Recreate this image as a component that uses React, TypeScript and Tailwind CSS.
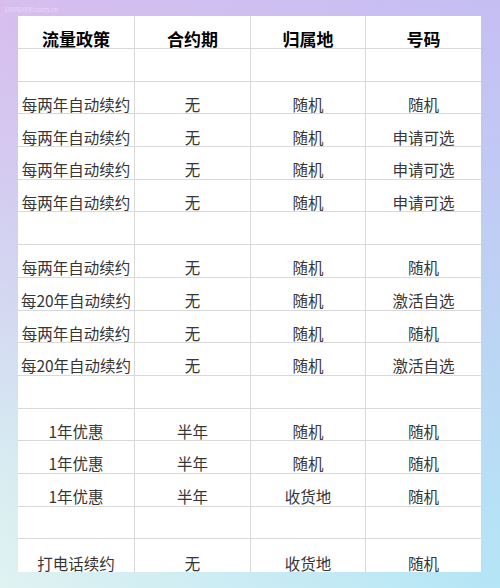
import React from 'react';

type Row = [string, string, string, string] | null;

const rows: Row[] = [
  null,
  ['每两年自动续约', '无', '随机', '随机'],
  ['每两年自动续约', '无', '随机', '申请可选'],
  ['每两年自动续约', '无', '随机', '申请可选'],
  ['每两年自动续约', '无', '随机', '申请可选'],
  null,
  ['每两年自动续约', '无', '随机', '随机'],
  ['每20年自动续约', '无', '随机', '激活自选'],
  ['每两年自动续约', '无', '随机', '随机'],
  ['每20年自动续约', '无', '随机', '激活自选'],
  null,
  ['1年优惠', '半年', '随机', '随机'],
  ['1年优惠', '半年', '随机', '随机'],
  ['1年优惠', '半年', '收货地', '随机'],
  null,
  ['打电话续约', '无', '收货地', '随机'],
];

const headers = ['流量政策', '合约期', '归属地', '号码'];
const widths = ['w-[116px]', 'w-[116px]', 'w-[115px]', 'w-[116px]'];

const Cell: React.FC<{ text?: string; col: number; header?: boolean }> = ({ text, col, header }) => (
  <div
    className={`${widths[col]} flex items-end justify-center pb-[1px] leading-none ${
      col > 0 ? 'border-l border-[#d9d9d9]' : ''
    } ${header ? 'text-[17px] font-bold text-black' : 'text-[15.5px] text-[#363636]'}`}
  >
    {text}
  </div>
);

export default function App() {
  return (
    <div
      className="w-[500px] h-[588px] overflow-hidden bg-[linear-gradient(135deg,rgba(228,190,236,0.6)_0%,rgba(228,190,236,0)_45%),linear-gradient(to_top_right,rgba(235,245,240,0.8)_0%,rgba(235,245,240,0)_50%),linear-gradient(to_bottom,#c6bef2,#b4e6f6)]"
      style={{ fontFamily: '"Noto Sans CJK SC", "Noto Sans", sans-serif' }}
    >
      <div className="h-[16px] pl-[4px] pt-[6px] text-[7px] leading-none text-white/40 tracking-tight">
        19050000.com.cn
      </div>
      <div className="ml-[18px] w-[463px] h-[556px] bg-white flex flex-col">
        <div className="flex h-[33px] border-b border-[#d9d9d9]">
          {headers.map((h, i) => (
            <Cell key={i} text={h} col={i} header />
          ))}
        </div>
        {rows.map((r, idx) => (
          <div
            key={idx}
            className={`flex h-[32.7px] ${idx < rows.length - 1 ? 'border-b border-[#d9d9d9]' : ''}`}
          >
            {[0, 1, 2, 3].map((c) => (
              <Cell key={c} text={r ? r[c] : ''} col={c} />
            ))}
          </div>
        ))}
      </div>
    </div>
  );
}
